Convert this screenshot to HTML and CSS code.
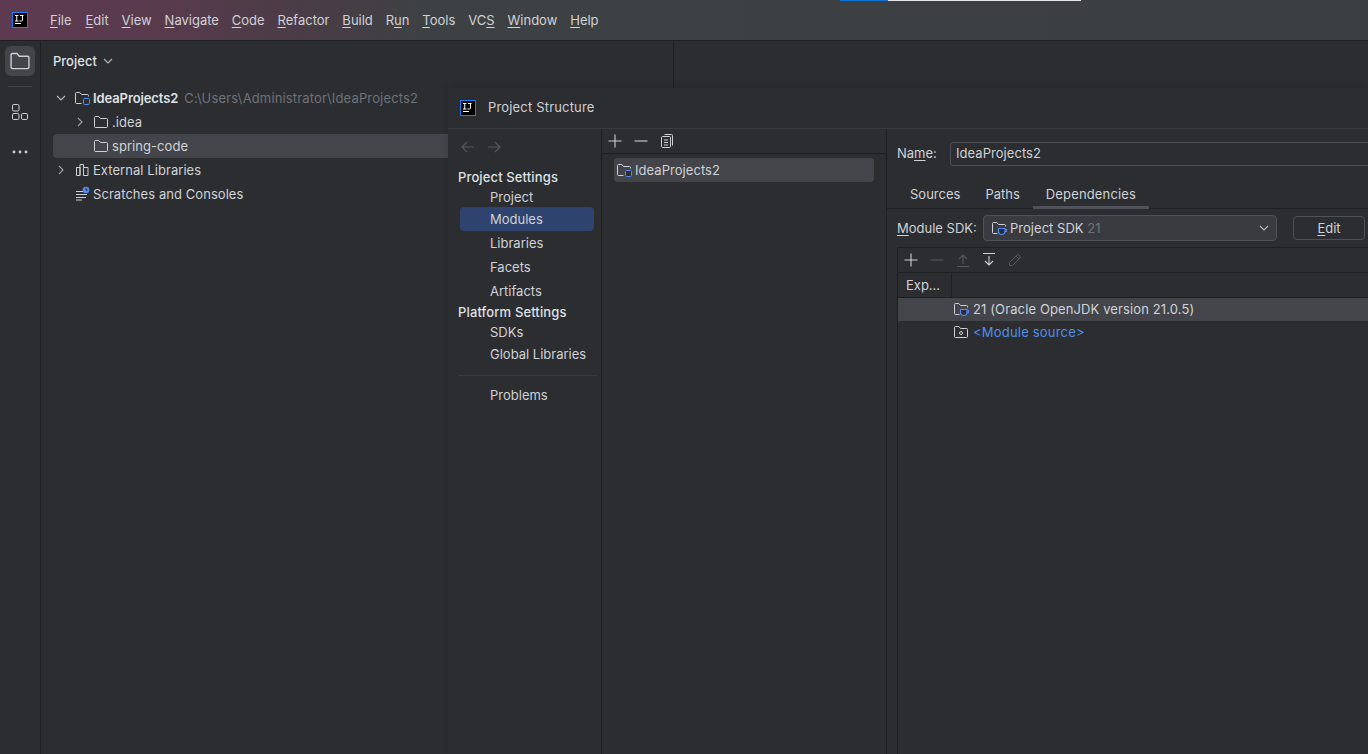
FILE: index.html
```html
<!DOCTYPE html>
<html lang="en">
<head>
<meta charset="utf-8">
<title>Project Structure</title>
<link rel="stylesheet" href="styles.css">
</head>
<body>
<svg class="defs" width="0" height="0" aria-hidden="true">
  <symbol id="ij" viewBox="0 0 16 16">
    <rect x=".5" y=".5" width="15" height="15" fill="#000" stroke="#1a7ff0"/>
    <path d="M3 3.500h3.500M4.750 3.500v5.500M3 9h3.500M8 3.500h3.500M10.500 3.500v4.500a1 1 0 0 1-1 1H7.500M3 11.500h6" fill="none" stroke="#fff" stroke-width="1"/>
  </symbol>
  <symbol id="folder" viewBox="0 0 16 16">
    <path d="M1.500 12.500v-9a1 1 0 0 1 1-1h3.300l1.700 2h6a1 1 0 0 1 1 1v7a1 1 0 0 1-1 1h-11a1 1 0 0 1-1-1z" fill="none" stroke="#ced0d6"/>
  </symbol>
  <symbol id="module" viewBox="0 0 16 16">
    <path d="M7.500 13.500h-5a1 1 0 0 1-1-1v-9a1 1 0 0 1 1-1h3.300l1.700 2h6a1 1 0 0 1 1 1v1" fill="none" stroke="#ced0d6"/>
    <rect x="9.500" y="8.500" width="6" height="6" rx="1.200" fill="#2b2d30" stroke="#548af7"/>
  </symbol>
  <symbol id="sdk" viewBox="0 0 16 16">
    <path d="M6.500 13.500h-4a1 1 0 0 1-1-1v-9a1 1 0 0 1 1-1h3.300l1.700 2h6a1 1 0 0 1 1 1v1" fill="none" stroke="#ced0d6"/>
    <path d="M7.500 8.500h6.500v3a3 3 0 0 1-3 3h-.5a3 3 0 0 1-3-3zM14 9.500h1.500v2H13.800" fill="#2b2d30" stroke="#548af7" stroke-width="1.200"/>
  </symbol>
  <symbol id="chev-d" viewBox="0 0 12 12"><path d="M2 4l4 4 4-4" fill="none" stroke="#b4b8bf" stroke-width="1.100"/></symbol>
  <symbol id="chev-r" viewBox="0 0 12 12"><path d="M4 2l4 4-4 4" fill="none" stroke="#9da0a8" stroke-width="1.100"/></symbol>
  <symbol id="plus" viewBox="0 0 16 16"><path d="M8 1.500v13M1.500 8h13" fill="none" stroke="currentColor" stroke-width="1.100"/></symbol>
  <symbol id="minus" viewBox="0 0 16 16"><path d="M1.500 8h13" fill="none" stroke="currentColor" stroke-width="1.100"/></symbol>
</svg>

<div class="app">
  <header class="titlebar">
    <svg class="logo"><use href="#ij"/></svg>
    <nav class="menu">
      <span><u>F</u>ile</span><span><u>E</u>dit</span><span><u>V</u>iew</span><span><u>N</u>avigate</span><span><u>C</u>ode</span><span><u>R</u>efactor</span><span><u>B</u>uild</span><span>R<u>u</u>n</span><span><u>T</u>ools</span><span>VC<u>S</u></span><span><u>W</u>indow</span><span><u>H</u>elp</span>
    </nav>
    <div class="strip"><i class="strip-blue"></i><i class="strip-white"></i></div>
  </header>

  <div class="body">
    <aside class="stripe">
      <div class="stripe-btn active">
        <svg width="22" height="22"><use href="#folder"/></svg>
      </div>
      <div class="stripe-sep"></div>
      <div class="stripe-btn">
        <svg width="20" height="20" viewBox="0 0 20 20" fill="none" stroke="#ced0d6"><rect x="2.500" y="2.500" width="6.500" height="6.500" rx="1.300"/><rect x="2.500" y="11.500" width="6.500" height="6" rx="1.300"/><rect x="11.500" y="11.500" width="6" height="6" rx="1.300"/></svg>
      </div>
      <div class="stripe-btn dots">
        <svg width="20" height="20" viewBox="0 0 20 20" fill="#ced0d6"><circle cx="4" cy="10" r="1.400"/><circle cx="10" cy="10" r="1.400"/><circle cx="16" cy="10" r="1.400"/></svg>
      </div>
    </aside>

    <section class="project">
      <div class="panel-head">
        <b>Project</b>
        <svg width="12" height="12"><use href="#chev-d"/></svg>
      </div>
      <div class="tree">
        <div class="row lvl0"><svg class="arrow" width="12" height="12"><use href="#chev-d"/></svg><svg class="ic" width="16" height="16"><use href="#module"/></svg><b>IdeaProjects2</b><span class="hint">C:\Users\Administrator\IdeaProjects2</span></div>
        <div class="row lvl1"><svg class="arrow" width="12" height="12"><use href="#chev-r"/></svg><svg class="ic" width="16" height="16"><use href="#folder"/></svg>.idea</div>
        <div class="row lvl1 selected"><span class="arrow"></span><svg class="ic" width="16" height="16"><use href="#folder"/></svg>spring-code</div>
        <div class="row lvl0"><svg class="arrow" width="12" height="12"><use href="#chev-r"/></svg><svg class="ic" width="16" height="16" viewBox="0 0 16 16" fill="none" stroke="#ced0d6"><path d="M2.500 5.500h3.500v8h-3.500zM6 13.500v-11h3.500v11M9.500 13.500v-8h4.500v8z"/></svg>External Libraries</div>
        <div class="row lvl0"><span class="arrow"></span><svg class="ic" width="16" height="16" viewBox="0 0 16 16" fill="none"><path d="M2 5.500h7M2 8.500h11M2 11.500h10M2 14h6" stroke="#ced0d6"/><circle cx="12" cy="4" r="3.300" fill="#548af7"/><path d="M12 2.200v2h1.400" stroke="#1e1f22"/></svg>Scratches and Consoles</div>
      </div>
    </section>
    <div class="editor"></div>

    <div class="dialog">
      <div class="dlg-title">
        <svg class="logo"><use href="#ij"/></svg>
        <span>Project Structure</span>
      </div>
      <div class="dlg-body">
        <div class="nav">
          <div class="nav-arrows">
            <svg width="16" height="16" viewBox="0 0 16 16" fill="none" stroke="#55585e" stroke-width="1.100"><path d="M14 8H2M7 3L2 8l5 5"/></svg>
            <svg width="16" height="16" viewBox="0 0 16 16" fill="none" stroke="#55585e" stroke-width="1.100"><path d="M2 8h12M9 3l5 5-5 5"/></svg>
          </div>
          <div class="nav-head first">Project Settings</div>
          <div class="nav-item h20">Project</div>
          <div class="nav-item active">Modules</div>
          <div class="nav-item">Libraries</div>
          <div class="nav-item">Facets</div>
          <div class="nav-item">Artifacts</div>
          <div class="nav-head">Platform Settings</div>
          <div class="nav-item h22">SDKs</div>
          <div class="nav-item h22">Global Libraries</div>
          <div class="nav-sep"></div>
          <div class="nav-item">Problems</div>
        </div>

        <div class="modules">
          <div class="mod-tools">
            <svg class="tool" width="16" height="16"><use href="#plus"/></svg>
            <svg class="tool" width="16" height="16"><use href="#minus"/></svg>
            <svg class="tool" width="16" height="16" viewBox="0 0 16 16" fill="none" stroke="currentColor"><path d="M5.500 1.500h7a1 1 0 0 1 1 1v10"/><rect x="2.500" y="3.500" width="9" height="11" rx="1"/><path d="M5 7h4M5 9.500h4M5 12h4"/></svg>
          </div>
          <div class="mod-row"><svg width="16" height="16"><use href="#module"/></svg>IdeaProjects2</div>
        </div>

        <div class="detail">
          <div class="name-row">
            <label>Na<u>m</u>e:</label>
            <div class="name-input">IdeaProjects2</div>
          </div>
          <div class="tabs">
            <span class="tab">Sources</span><span class="tab">Paths</span><span class="tab on">Dependencies</span>
          </div>
          <div class="sdk-row">
            <label><u>M</u>odule SDK:</label>
            <div class="combo">
              <svg width="16" height="16"><use href="#sdk"/></svg>
              <span>Project SDK <em>21</em></span>
              <svg class="combo-arrow" width="12" height="12"><use href="#chev-d"/></svg>
            </div>
            <div class="btn"><u>E</u>dit</div>
          </div>
          <div class="table">
            <div class="tbl-tools">
              <svg class="tool" width="16" height="16"><use href="#plus"/></svg>
              <svg class="tool off" width="16" height="16"><use href="#minus"/></svg>
              <svg class="tool off" width="16" height="16" viewBox="0 0 16 16" fill="none" stroke="currentColor" stroke-width="1.100"><path d="M2 14.500h12M8 12V3M4 7l4-4 4 4"/></svg>
              <svg class="tool" width="16" height="16" viewBox="0 0 16 16" fill="none" stroke="currentColor" stroke-width="1.100"><path d="M2 1.500h12M8 4v9M4 9l4 4 4-4"/></svg>
              <svg class="tool off" width="16" height="16" viewBox="0 0 16 16" fill="none" stroke="currentColor"><path d="M2.500 13.500v-3l7.500-7.500a1.400 1.400 0 0 1 2 0l1 1a1.400 1.400 0 0 1 0 2L5.500 13.500zM9 4l3 3"/></svg>
            </div>
            <div class="tbl-head"><span class="col">Exp...</span></div>
            <div class="tbl-row sel"><svg width="16" height="16"><use href="#sdk"/></svg>21 (Oracle OpenJDK version 21.0.5)</div>
            <div class="tbl-row link"><svg width="16" height="16" viewBox="0 0 16 16" fill="none" stroke="#ced0d6"><path d="M1.500 12.500v-9a1 1 0 0 1 1-1h3.300l1.700 2h6a1 1 0 0 1 1 1v7a1 1 0 0 1-1 1h-11a1 1 0 0 1-1-1z"/><circle cx="8" cy="9" r="1.500"/></svg>&lt;Module source&gt;</div>
          </div>
        </div>
      </div>
    </div>
  </div>
</div>
</body>
</html>
```
FILE: styles.css
```css
* { box-sizing: border-box; }
html, body { margin: 0; height: 100%; overflow: hidden; }
body {
  background: #2b2d30;
  color: #d0d2d7;
  font: 13px/16px Inter, "Liberation Sans", sans-serif;
}
b { font-weight: 600; color: #dfe1e5; }
u { text-underline-offset: 2px; text-decoration-thickness: 1px; }
svg { display: block; flex: none; }
.defs { position: absolute; }

.app { position: relative; display: flex; flex-direction: column; width: 1368px; height: 754px; overflow: hidden; }

.titlebar {
  position: relative;
  display: flex;
  align-items: center;
  flex: none;
  height: 41px;
  padding-left: 12px;
  background: linear-gradient(90deg, #5d3a50 0, #5a3a4e 140px, #4a3c46 300px, #3e4143 420px, #3c3f41 100%);
  border-bottom: 1px solid #1e1f22;
}
.logo { width: 16px; height: 16px; }
.menu { display: flex; gap: 12.900px; margin-left: 22px; }
.menu span:first-child { margin-right: 1px; }
.strip { position: absolute; top: 0; left: 840px; display: flex; height: 1px; }
.strip-blue { width: 48px; background: #0a6fd0; }
.strip-white { width: 193px; background: #e6e6e6; }

.body { display: flex; flex: 1; min-height: 0; position: relative; }

.stripe { flex: none; width: 41px; padding: 5px 5px 0; border-right: 1px solid #1e1f22; }
.stripe-btn { display: flex; align-items: center; justify-content: center; width: 30px; height: 30px; border-radius: 6px; }
.stripe-btn.active { background: #43454a; }
.stripe-sep { height: 1px; margin: 10px 3px 10px; background: #43454a; }
.stripe-btn.dots { margin-top: 10px; }

.project { flex: none; width: 633px; border-right: 1px solid #1e1f22; }
.panel-head { display: flex; align-items: center; gap: 5px; height: 40px; padding-left: 12px; }
.panel-head b { font-weight: 500; }
.tree { padding: 5px 0 0 12px; }
.row { display: flex; align-items: center; height: 24px; white-space: nowrap; letter-spacing: .06px; }
.row b { letter-spacing: -.1px; }
.row .arrow { flex: none; width: 12px; height: 12px; }
.row .ic { margin-right: 3px; }
.lvl0 { padding-left: 2px; }
.lvl0 .arrow { margin-right: 7px; }
.lvl1 { padding-left: 21px; }
.lvl1 .arrow { margin-right: 7px; }
.selected { background: #43454a; border-radius: 4px; }
.hint { margin-left: 6px; color: #6f737a; letter-spacing: .15px; }
.editor { flex: 1; }

.dialog {
  position: absolute;
  left: 448px; top: 47px; right: 0; bottom: 0;
  display: flex;
  flex-direction: column;
  background: #2b2d30;
  box-shadow: 0 -3px 6px rgba(0, 0, 0, .12);
}
.dlg-title { display: flex; align-items: center; gap: 12px; flex: none; height: 41px; padding-left: 12px; border-bottom: 1px solid #393b40; letter-spacing: .17px; }
.dlg-title span { margin-bottom: 2px; }
.dlg-title .logo { margin-bottom: 1px; }
.dlg-body { display: flex; flex: 1; min-height: 0; }

.nav { flex: none; width: 154px; padding: 0 7px 0 10px; border-right: 1px solid #1e1f22; }
.nav-arrows { display: flex; gap: 10px; align-items: center; height: 34px; padding: 0 0 0 2px; }
.nav-arrows svg { margin-top: 1px; }
.nav-head { display: flex; align-items: center; height: 18px; font-weight: 500; color: #dfe1e5; letter-spacing: .13px; }
.nav-head.first { height: 20px; margin-top: 4px; }
.nav-item { display: flex; align-items: center; height: 24px; padding-left: 30px; margin-left: 2px; border-radius: 4px; }
.nav-item.h20 { height: 20px; }
.nav-item.h22 { height: 22px; }
.nav-item.active { background: #2e436e; }
.nav-sep { height: 1px; margin: 10px -3px 7px 0; background: #393b40; }

.modules { flex: none; width: 285px; border-right: 1px solid #1e1f22; }
.mod-tools { display: flex; align-items: center; gap: 10px; height: 25px; padding-left: 5px; border-bottom: 1px solid #1e1f22; color: #ced0d6; }
.mod-row { display: flex; align-items: center; gap: 3px; height: 24px; margin: 4px 12px 0; padding-left: 2px; background: #43454a; border-radius: 4px; letter-spacing: .05px; }

.detail { display: flex; flex-direction: column; flex: 1; min-width: 0; overflow: hidden; }
.name-row { display: flex; flex: none; align-items: center; height: 24px; margin-top: 13px; padding-left: 10px; }
.name-row label { width: 53px; flex: none; margin-bottom: 2px; }
.name-input { flex: 1; height: 24px; margin-right: -10px; padding: 2px 5px; border: 1px solid #4e5157; border-radius: 3px 0 0 3px; letter-spacing: .05px; }
.tabs { display: flex; flex: none; height: 38px; margin-top: 5px; padding: 15px 0 0 10px; border-bottom: 1px solid #1e1f22; }
.tab { padding: 0 13px; height: 23px; border-bottom: 3px solid transparent; }
.tab:first-child { margin-right: -1px; }
.tab.on { border-bottom-color: #4e5157; letter-spacing: .15px; }
.sdk-row { display: flex; flex: none; align-items: center; height: 38px; padding-left: 10px; }
.sdk-row label { flex: none; width: 86px; }
.combo { display: flex; align-items: center; gap: 3px; position: relative; flex: none; width: 294px; height: 26px; padding-left: 7px; background: #393b40; border: 1px solid #4e5157; border-radius: 4px; letter-spacing: .03px; }
.combo em { font-style: normal; color: #6f737a; }
.combo-arrow { position: absolute; right: 6px; top: 6px; }
.btn { flex: none; display: flex; align-items: center; justify-content: center; width: 72px; height: 24px; margin-left: 16px; border: 1px solid #4e5157; border-radius: 4px; }
.table { flex: 1; margin-left: 10px; border-top: 1px solid #1e1f22; border-left: 1px solid #1e1f22; }
.tbl-tools { display: flex; align-items: center; gap: 10px; height: 25px; padding-left: 5px; border-bottom: 1px solid #1e1f22; color: #ced0d6; }
.tool.off { color: #55585e; }
.tbl-head { display: flex; height: 25px; border-bottom: 1px solid #1e1f22; }
.col { display: flex; align-items: center; width: 54px; padding-left: 8px; border-right: 1px solid #1e1f22; }
.tbl-row { display: flex; align-items: center; gap: 4px; height: 23px; padding-bottom: 2px; padding-left: 55px; letter-spacing: .12px; }
.tbl-row.sel { background: #43454a; }
.tbl-row.link { color: #5090ea; letter-spacing: .2px; }
```
